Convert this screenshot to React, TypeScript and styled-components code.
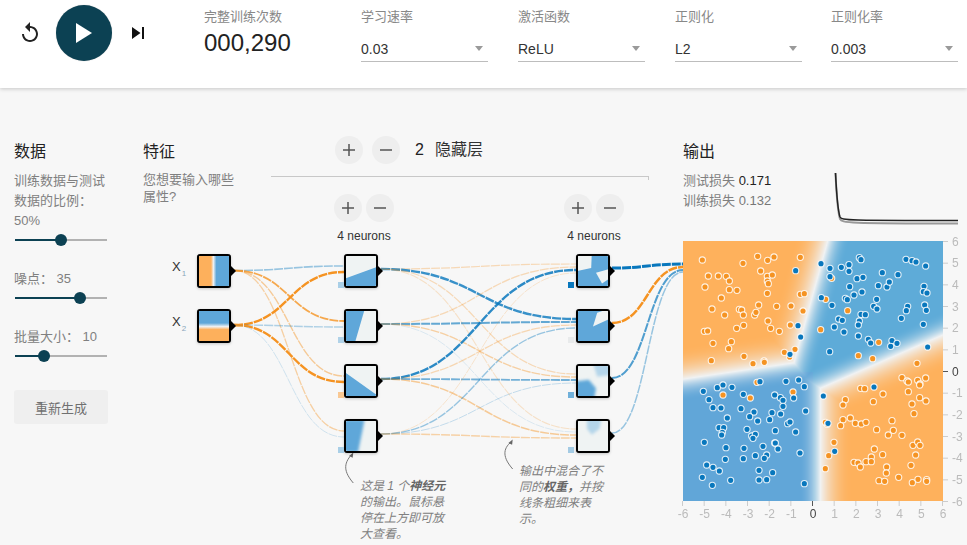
import React, { useEffect, useRef } from "react";
import styled, { createGlobalStyle } from "styled-components";

const FONT = `"Liberation Sans", "Noto Sans CJK SC", sans-serif`;
const ORANGE = "#f59322";
const BLUE = "#0877bd";

const Global = createGlobalStyle`
  html, body { margin: 0; padding: 0; background: #f7f7f7; overflow: hidden; }
  body { font-family: ${FONT}; width: 967px; height: 545px; }
`;

const Page = styled.div`
  width: 967px;
  height: 545px;
  display: flex;
  flex-direction: column;
  overflow: hidden;
  background: #f7f7f7;
`;

const Header = styled.header`
  height: 88px;
  flex: none;
  background: #fff;
  box-shadow: 0 1px 4px rgba(0, 0, 0, 0.2);
  display: flex;
  align-items: flex-start;
  padding-left: 18px;
  position: relative;
  z-index: 2;
`;

const Player = styled.div`
  width: 132px;
  height: 56px;
  margin-top: 5px;
  display: flex;
  align-items: center;
  gap: 14px;
  svg { flex: none; display: block; }
`;

const PlayButton = styled.div`
  width: 56px;
  height: 56px;
  flex: none;
  border-radius: 50%;
  background: #0c4153;
  box-shadow: 0 0 1px rgba(0, 0, 0, 0.3);
  display: flex;
  align-items: center;
  justify-content: center;
`;

const HeaderField = styled.div<{ $w: number; $ml: number }>`
  width: ${(p) => p.$w}px;
  margin-left: ${(p) => p.$ml}px;
  padding-top: 8px;
  flex: none;
`;

const FieldLabel = styled.div`
  font-size: 13px;
  line-height: 18px;
  color: #888;
`;

const EpochValue = styled.div`
  font-size: 24px;
  line-height: 30px;
  margin-top: 2px;
  color: #222;
`;

const SelectBox = styled.div`
  margin-top: 11px;
  height: 25px;
  box-sizing: border-box;
  padding: 0 5px 1px 0;
  border-bottom: 1px solid #bdbdbd;
  display: flex;
  align-items: center;
  justify-content: space-between;
  font-size: 14px;
  color: #333;
`;

const Caret = styled.span`
  width: 0;
  height: 0;
  border-left: 4.5px solid transparent;
  border-right: 4.5px solid transparent;
  border-top: 5px solid #9a9a9a;
`;

const Main = styled.main`
  flex: 1;
  display: flex;
  padding: 53px 0 0 14px;
  min-height: 0;
`;

const DataColumn = styled.section`
  width: 94px;
  margin-right: 35px;
  flex: none;
`;

const Title = styled.h4`
  margin: 0;
  font-size: 16px;
  line-height: 22px;
  font-weight: 400;
  color: #222;
`;

const SideText = styled.div<{ $mt?: number }>`
  font-size: 13px;
  line-height: 20px;
  color: #808080;
  margin-top: ${(p) => p.$mt ?? 0}px;
`;

const SliderTrack = styled.div<{ $mt: number }>`
  position: relative;
  width: 92px;
  margin-left: 1px;
  height: 2px;
  margin-top: ${(p) => p.$mt}px;
  background: #b2b2b2;
`;

const SliderFill = styled.div`
  height: 2px;
  background: #0c4153;
`;

const SliderThumb = styled.div`
  position: absolute;
  top: -5px;
  width: 12px;
  height: 12px;
  margin-left: -6px;
  border-radius: 50%;
  background: #0c4153;
`;

const Regenerate = styled.button`
  display: block;
  width: 94px;
  height: 34px;
  margin-top: 33px;
  border: 0;
  border-radius: 3px;
  background: #efefef;
  color: #707070;
  font: 400 13px ${FONT};
  padding: 0;
`;

const NetworkColumn = styled.section`
  width: 540px;
  flex: none;
  position: relative;
  display: flex;
  align-items: flex-start;
`;

const FeatureIntro = styled.div`
  width: 128px;
  flex: none;
`;

const FeatureText = styled.div`
  width: 96px;
  margin-top: 8px;
  font-size: 13px;
  line-height: 17px;
  color: #808080;
`;

const LayerHeader = styled.div`
  width: 378px;
  height: 41px;
  margin-top: -5px;
  box-sizing: border-box;
  border-bottom: 1px solid #c8c8c8;
  display: flex;
  align-items: flex-start;
  position: relative;
  padding-left: 64px;
  gap: 9px;
  &::after {
    content: "";
    position: absolute;
    right: 0;
    bottom: -1px;
    height: 4px;
    width: 1px;
    background: #c8c8c8;
    transform: translateY(3px);
  }
`;

const RoundButton = styled.div`
  width: 28px;
  height: 28px;
  flex: none;
  border-radius: 50%;
  background: #eeeeee;
  display: flex;
  align-items: center;
  justify-content: center;
  svg { display: block; }
`;

const LayerCount = styled.div`
  margin-left: 6px;
  font-size: 16px;
  line-height: 28px;
  color: #222;
  span { margin-left: 11px; color: #333; }
`;

const Wires = styled.svg`
  position: absolute;
  left: 0;
  top: -141px;
  width: 540px;
  height: 545px;
  pointer-events: none;
`;

const NeuronControls = styled.div<{ $x: number }>`
  position: absolute;
  left: ${(p) => p.$x}px;
  top: 53px;
  width: 62px;
  display: flex;
  flex-direction: column;
  align-items: center;
`;

const ButtonPair = styled.div`
  display: flex;
  gap: 4.5px;
`;

const NeuronLabel = styled.div`
  font-size: 12px;
  line-height: 14px;
  margin-top: 7px;
  color: #333;
  white-space: nowrap;
`;

const NodeBox = styled.div<{ $x: number; $y: number }>`
  position: absolute;
  left: ${(p) => p.$x - 143}px;
  top: ${(p) => p.$y - 141}px;
  width: 34px;
  height: 34px;
  box-sizing: border-box;
  border: 2px solid #000;
  border-radius: 3px;
  background: #eff3f3;
  box-shadow: 0 1px 3px rgba(0, 0, 0, 0.2);
  &::after {
    content: "";
    position: absolute;
    right: -7px;
    top: 10px;
    border-left: 5px solid #000;
    border-top: 5px solid transparent;
    border-bottom: 5px solid transparent;
  }
  svg { display: block; width: 30px; height: 30px; border-radius: 1px; }
`;

const Bias = styled.div<{ $x: number; $y: number; $c: string }>`
  position: absolute;
  left: ${(p) => p.$x - 143}px;
  top: ${(p) => p.$y - 141}px;
  width: 5.5px;
  height: 5.5px;
  background: ${(p) => p.$c};
`;

const InputLabel = styled.div<{ $y: number }>`
  position: absolute;
  left: 29px;
  top: ${(p) => p.$y - 141}px;
  font-size: 13px;
  line-height: 16px;
  color: #333;
  sub {
    font-size: 8px;
    line-height: 0;
    color: #8aa6bb;
    margin-left: 1px;
    vertical-align: -5px;
  }
`;

const Note = styled.div<{ $x: number; $y: number }>`
  position: absolute;
  left: ${(p) => p.$x - 143}px;
  top: ${(p) => p.$y - 141}px;
  width: 88px;
  font-size: 12px;
  line-height: 16px;
  font-style: italic;
  color: #808080;
  b { font-weight: 700; color: #666; }
`;

const OutputColumn = styled.section`
  width: 284px;
  flex: none;
  position: relative;
`;

const LossRow = styled.div<{ $mt: number; $strong?: boolean }>`
  font-size: 13px;
  line-height: 20px;
  margin-top: ${(p) => p.$mt}px;
  color: #808080;
  b { font-weight: 400; color: ${(p) => (p.$strong ? "#222" : "#777")}; }
`;

const LossChart = styled.svg`
  position: absolute;
  left: 152px;
  top: 32px;
  width: 124px;
  height: 54px;
  overflow: visible;
`;

const Plot = styled.div`
  position: relative;
  width: 284px;
  height: 285px;
  margin-top: 30px;
  canvas { display: block; width: 260px; height: 260px; }
`;

const PlotOverlay = styled.svg`
  position: absolute;
  left: 0;
  top: 0;
  width: 284px;
  height: 285px;
  overflow: visible;
  text { font: 400 12px ${FONT}; fill: #bbb; }
  text.zero { fill: #444; }
`;

/* ---------- data points, read off the picture ---------- */
type P = [number, number];
const top = (a: P[]): P[] => a.map(([x, y]) => [x / 3 - 8, y / 3 - 6]);
const bot = (a: P[]): P[] => a.map(([x, y]) => [x / 3 - 8, y / 3 + 144]);

const orangePts: P[] = [
  ...top([[82,75],[204,85],[248,64],[278,76],[297,66],[376,67],[257,108],[100,123],[130,123],[154,124],[163,138],[90,156],[163,164],[186,166],[139,189],[277,124],[292,120],[277,138],[280,146],[277,175],[376,178],[388,176],[111,222],[149,240],[193,223],[200,225],[205,240],[239,240],[243,232],[251,210],[305,214],[348,213],[384,228],[279,258],[287,280],[313,289],[346,270],[185,280],[206,271],[88,289],[98,288],[114,325],[169,320],[161,341],[109,377],[207,364],[234,386],[267,378],[268,382],[328,352],[360,343],[344,366],[246,442],[452,193],[470,130],[518,227],[437,284],[611,322],[550,362],[593,371],[726,385],[681,428],[696,438],[700,441],[728,436],[735,447],[752,429]]),
  ...bot([[144,30],[226,39],[354,21],[557,10],[569,11],[624,27],[700,20],[734,38],[753,48],[711,57],[717,86],[511,44],[504,60],[595,50],[451,112],[457,118],[504,104],[526,99],[541,115],[559,117],[573,112],[497,122],[651,107],[605,134],[655,136],[640,150],[681,151],[477,172],[598,192],[461,212],[589,216],[623,209],[722,210],[714,181],[728,171],[735,181],[537,232],[549,234],[556,246],[573,230],[589,230],[635,246],[634,264],[708,241],[451,251],[671,277],[612,287],[629,289],[712,293],[729,283],[755,284],[755,289],[734,0]]),
];
const bluePts: P[] = [
  ...top([[362,107],[438,86],[465,100],[499,97],[522,89],[522,109],[553,68],[558,74],[693,73],[711,77],[723,81],[752,93],[465,125],[546,131],[564,127],[622,113],[669,119],[524,155],[610,152],[636,156],[643,141],[747,154],[745,170],[756,174],[561,171],[537,180],[439,188],[511,190],[517,194],[605,193],[471,211],[596,214],[606,222],[698,214],[694,227],[749,210],[754,226],[558,238],[571,239],[491,252],[502,256],[553,258],[550,270],[478,276],[679,250],[745,268],[369,272],[507,291],[377,306],[550,303],[580,313],[587,324],[651,317],[647,334],[666,325],[758,336],[464,350],[345,358],[255,440],[333,439],[371,435]]),
  ...bot([[85,19],[127,8],[144,0],[171,7],[205,28],[102,44],[114,68],[138,69],[198,71],[237,81],[224,95],[291,83],[316,38],[324,46],[299,30],[356,39],[324,64],[317,87],[392,78],[445,33],[157,99],[248,108],[284,104],[338,116],[345,111],[132,128],[146,128],[142,142],[140,150],[216,133],[301,137],[362,141],[230,153],[241,148],[234,160],[88,172],[153,188],[207,190],[264,184],[299,174],[301,174],[309,192],[241,212],[275,210],[268,220],[205,221],[151,223],[375,204],[479,199],[95,240],[114,247],[133,258],[252,256],[293,263],[82,277],[167,286],[252,285],[275,284],[112,301],[388,296],[597,6],[388,5],[459,115]]),
];

/* ---------- decision surface ---------- */
const side = (x: number, y: number, ax: number, ay: number, bx: number, by: number) => {
  const dx = bx - ax;
  const dy = by - ay;
  return ((y - ay) * dx - (x - ax) * dy) / Math.hypot(dx, dy);
};
const surface = (x: number, y: number) => {
  const a = -side(x, y, 0.65, 6, -0.9, 0.4);
  const b = side(x, y, -6, -0.35, -0.9, 0.4);
  const tl = Math.min(a, b);
  const c = x - 0.32;
  const d = -side(x, y, 0.25, -0.8, 6, 1.7);
  const br = Math.min(c, d);
  return Math.max(tl, br);
};
const mix = (p: number[], q: number[], t: number) => p.map((v, i) => v + (q[i] - v) * t);
const HEAT_O = [254, 177, 92];
const HEAT_W = [240, 242, 243];
const HEAT_B = [94, 171, 216];

function HeatCanvas() {
  const ref = useRef<HTMLCanvasElement>(null);
  useEffect(() => {
    const ctx = ref.current?.getContext("2d");
    if (!ctx) return;
    const img = ctx.createImageData(260, 260);
    for (let py = 0; py < 260; py++) {
      for (let px = 0; px < 260; px++) {
        const x = (px / 260) * 12 - 6;
        const y = 6 - (py / 260) * 12;
        const o = surface(x, y);
        const t = Math.min(1, Math.abs(o) / (o > 0 ? 1.5 : 1));
        const ease = t * (2 - t);
        const blue = x < 0 && y < 0 ? [97, 166, 216] : HEAT_B;
        const col = mix(HEAT_W, o > 0 ? HEAT_O : blue, ease);
        const i = (py * 260 + px) * 4;
        img.data[i] = col[0];
        img.data[i + 1] = col[1];
        img.data[i + 2] = col[2];
        img.data[i + 3] = 255;
      }
    }
    ctx.putImageData(img, 0, 0);
  }, []);
  return <canvas ref={ref} width={260} height={260} />;
}

/* ---------- wires ---------- */
const curve = (x1: number, y1: number, x2: number, y2: number) => {
  const m = (x1 + x2) / 2;
  return `M${x1} ${y1}C${m} ${y1} ${m} ${y2} ${x2} ${y2}`;
};
const ROWS = [254, 309, 364, 419];
const style1: [string, number, number][][] = [
  [[BLUE, 1.6, 0.4], [ORANGE, 1.8, 0.8], [ORANGE, 1.4, 0.45], [ORANGE, 1.3, 0.4]],
  [[ORANGE, 2.4, 1], [BLUE, 1.4, 0.3], [ORANGE, 2.4, 1], [BLUE, 1, 0.17]],
];
const style2: [string, number, number][][] = [
  [[ORANGE, 1.2, 0.3], [BLUE, 2.4, 0.8], [ORANGE, 1.2, 0.3], [ORANGE, 1.1, 0.22]],
  [[ORANGE, 1.3, 0.3], [BLUE, 2, 0.62], [ORANGE, 1.4, 0.4], [BLUE, 1, 0.12]],
  [[BLUE, 2.4, 0.85], [ORANGE, 1.3, 0.32], [BLUE, 1.8, 0.55], [ORANGE, 1.5, 0.45]],
  [[ORANGE, 1, 0.2], [BLUE, 1.4, 0.4], [BLUE, 1, 0.22], [ORANGE, 1.4, 0.38]],
];
const style3: [string, number, number][] = [
  [BLUE, 3, 1],
  [ORANGE, 2.5, 1],
  [BLUE, 2, 0.7],
  [BLUE, 1.5, 0.4],
];

function WireLayer() {
  const ox = 143;
  const links: React.ReactNode[] = [];
  const add = (key: string, d: string, c: string, w: number, o: number) =>
    links.push(
      <path key={key} d={d} fill="none" stroke={c} strokeWidth={w} strokeOpacity={o} strokeDasharray="9 1" />
    );
  style1.forEach((row, s) =>
    row.forEach(([c, w, o], t) =>
      add(`a${s}${t}`, curve(234 - ox, [270.5, 325][s], 344 - ox, ROWS[t] + 12 + s * 6), c, w, o)
    )
  );
  style2.forEach((row, s) =>
    row.forEach(([c, w, o], t) =>
      add(`b${s}${t}`, curve(381 - ox, ROWS[s] + 15, 576 - ox, ROWS[t] + 10 + s * 3), c, w, o)
    )
  );
  style3.forEach(([c, w, o], s) =>
    add(`c${s}`, curve(612 - ox, ROWS[s] + 14, 683 - ox, 264 + [0, 3, 6, 8][s]), c, w, o)
  );
  return (
    <Wires viewBox="0 0 540 545">
      {links}
      <path d="M210.3 483C201 472 200 464 208.7 454.5" fill="none" stroke="#777" strokeWidth="1" />
      <path d="M210.3 452.5l-4.3 3.500 3.700 1.800z" fill="#666" />
      <path d="M369.7 469C360 458 359 449 368.7 441.5" fill="none" stroke="#777" strokeWidth="1" />
      <path d="M369.7 439.5l-4.300 3.500 3.700 1.800z" fill="#666" />
    </Wires>
  );
}

/* ---------- node pictures ---------- */
const C_B = "#5ea7d9";
const C_L = "#b4d5ea";
function Mini({ kind }: { kind: number }) {
  const id = `soft${kind}`;
  const shapes: Record<number, React.ReactNode> = {
    0: <polygon points="-5,76 105,36 105,105 -5,105" fill={C_B} />,
    1: <polygon points="-5,-5 62,-5 30,105 -5,105" fill={C_B} />,
    2: <polygon points="-5,20 105,98 105,105 -5,105" fill={C_B} />,
    3: <polygon points="-10,-5 62,-5 40,105 -10,105" fill={C_B} />,
    4: (
      <>
        <rect x="-5" y="-5" width="110" height="110" fill={C_B} />
        <polygon points="-10,-10 46,-10 44,40 -10,52" fill="#eff3f3" />
        <polygon points="60,56 110,42 110,72 80,92" fill="#eff3f3" />
      </>
    ),
    5: (
      <>
        <rect x="-5" y="-5" width="110" height="110" fill={C_B} />
        <polygon points="50,52 64,6 110,-10 110,24" fill="#eff3f3" />
      </>
    ),
    6: (
      <>
        <polygon points="-10,52 36,46 60,74 54,110 -10,110" fill={C_B} />
        <polygon points="50,-10 110,-10 110,30 64,36" fill={C_L} />
      </>
    ),
    7: <polygon points="30,-10 78,-10 72,26 46,46 30,26" fill={C_L} />,
  };
  return (
    <svg viewBox="0 0 100 100">
      <defs>
        <filter id={id} x="-20%" y="-20%" width="140%" height="140%">
          <feGaussianBlur stdDeviation={kind === 3 || kind >= 6 ? 4.5 : 2.5} />
        </filter>
      </defs>
      <rect width="100" height="100" fill="#eff3f3" />
      <g filter={`url(#${id})`}>{shapes[kind]}</g>
    </svg>
  );
}

function InputMini({ vertical }: { vertical?: boolean }) {
  const id = vertical ? "gradX2" : "gradX1";
  return (
    <svg viewBox="0 0 100 100">
      <defs>
        {vertical ? (
          <linearGradient id={id} x1="0" y1="0" x2="0" y2="1">
            <stop offset="0.4" stopColor={C_B} />
            <stop offset="0.52" stopColor="#f0f2f3" />
            <stop offset="0.62" stopColor="#fdb05c" />
          </linearGradient>
        ) : (
          <linearGradient id={id} x1="0" y1="0" x2="1" y2="0">
            <stop offset="0.4" stopColor="#fdb05c" />
            <stop offset="0.48" stopColor="#f0f2f3" />
            <stop offset="0.58" stopColor={C_B} />
          </linearGradient>
        )}
      </defs>
      <rect width="100" height="100" fill={`url(#${id})`} />
    </svg>
  );
}

const Plus = () => (
  <svg width="14" height="14" viewBox="0 0 14 14">
    <path d="M1 7h12M7 1v12" stroke="#555" strokeWidth="1.5" fill="none" />
  </svg>
);
const Minus = () => (
  <svg width="14" height="14" viewBox="0 0 14 14">
    <path d="M1 7h12" stroke="#555" strokeWidth="1.5" fill="none" />
  </svg>
);

const fields = [
  { label: "学习速率", value: "0.03", ml: 0 },
  { label: "激活函数", value: "ReLU", ml: 30 },
  { label: "正则化", value: "L2", ml: 30 },
  { label: "正则化率", value: "0.003", ml: 29 },
];

function Slider({ pos, mt }: { pos: number; mt: number }) {
  return (
    <SliderTrack $mt={mt}>
      <SliderFill style={{ width: pos }} />
      <SliderThumb style={{ left: pos }} />
    </SliderTrack>
  );
}

const ticks = [6, 5, 4, 3, 2, 1, 0, -1, -2, -3, -4, -5, -6];

export default function App() {
  return (
    <Page>
      <Global />
      <Header>
        <Player>
          <svg width="24" height="24" viewBox="0 0 24 24" fill="#222">
            <path d="M12 5V1L7 6l5 5V7c3.31 0 6 2.69 6 6s-2.69 6-6 6-6-2.69-6-6H4c0 4.42 3.58 8 8 8s8-3.58 8-8-3.58-8-8-8z" />
          </svg>
          <PlayButton>
            <svg width="16" height="20" viewBox="0 0 16 20" fill="#fff">
              <path d="M0 0l16 10L0 20z" />
            </svg>
          </PlayButton>
          <svg width="24" height="24" viewBox="0 0 24 24" fill="#111">
            <path d="M6 18l8.5-6L6 6v12zM16 6v12h2V6h-2z" />
          </svg>
        </Player>
        <HeaderField $w={157} $ml={54}>
          <FieldLabel>完整训练次数</FieldLabel>
          <EpochValue>000,290</EpochValue>
        </HeaderField>
        {fields.map((f) => (
          <HeaderField key={f.label} $w={127} $ml={f.ml}>
            <FieldLabel>{f.label}</FieldLabel>
            <SelectBox>
              {f.value}
              <Caret />
            </SelectBox>
          </HeaderField>
        ))}
      </Header>
      <Main>
        <DataColumn>
          <Title>数据</Title>
          <SideText $mt={8}>
            训练数据与测试
            <br />
            数据的比例：
            <br />
            50%
          </SideText>
          <Slider pos={46} mt={8} />
          <SideText $mt={28}>噪点：&nbsp;35</SideText>
          <Slider pos={65} mt={8} />
          <SideText $mt={28}>批量大小：&nbsp;10</SideText>
          <Slider pos={29} mt={8} />
          <Regenerate>重新生成</Regenerate>
        </DataColumn>
        <NetworkColumn>
          <WireLayer />
          <FeatureIntro>
            <Title>特征</Title>
            <FeatureText>您想要输入哪些属性?</FeatureText>
          </FeatureIntro>
          <LayerHeader>
            <RoundButton>
              <Plus />
            </RoundButton>
            <RoundButton>
              <Minus />
            </RoundButton>
            <LayerCount>
              2<span>隐藏层</span>
            </LayerCount>
          </LayerHeader>
          <NeuronControls $x={190}>
            <ButtonPair>
              <RoundButton>
                <Plus />
              </RoundButton>
              <RoundButton>
                <Minus />
              </RoundButton>
            </ButtonPair>
            <NeuronLabel>4 neurons</NeuronLabel>
          </NeuronControls>
          <NeuronControls $x={420}>
            <ButtonPair>
              <RoundButton>
                <Plus />
              </RoundButton>
              <RoundButton>
                <Minus />
              </RoundButton>
            </ButtonPair>
            <NeuronLabel>4 neurons</NeuronLabel>
          </NeuronControls>
          <InputLabel $y={259}>
            X<sub>1</sub>
          </InputLabel>
          <InputLabel $y={314}>
            X<sub>2</sub>
          </InputLabel>
          <NodeBox $x={197} $y={254}>
            <InputMini />
          </NodeBox>
          <NodeBox $x={197} $y={309}>
            <InputMini vertical />
          </NodeBox>
          {ROWS.map((y, i) => (
            <NodeBox key={`a${y}`} $x={344} $y={y}>
              <Mini kind={i} />
            </NodeBox>
          ))}
          {ROWS.map((y, i) => (
            <NodeBox key={`b${y}`} $x={576} $y={y}>
              <Mini kind={i + 4} />
            </NodeBox>
          ))}
          {["#a9cfe7", "#b0d2e8", "#f9c893", "#a9cfe7"].map((c, i) => (
            <Bias key={`ba${i}`} $x={338} $y={ROWS[i] + 28} $c={c} />
          ))}
          {["#0877bd", "#e8eaeb", "#70b0da", "#a4cbe4"].map((c, i) => (
            <Bias key={`bb${i}`} $x={568} $y={ROWS[i] + 28} $c={c} />
          ))}
          <Note $x={360} $y={478}>
            这是 1 个<b>神经元</b>的输出。鼠标悬停在上方即可放大查看。
          </Note>
          <Note $x={519} $y={463}>
            输出中混合了不同的<b>权重，</b>并按线条粗细来表示。
          </Note>
        </NetworkColumn>
        <OutputColumn>
          <Title>输出</Title>
          <LossRow $mt={8} $strong>
            测试损失 <b>0.171</b>
          </LossRow>
          <LossRow $mt={0}>
            训练损失 <b>0.132</b>
          </LossRow>
          <LossChart viewBox="0 0 124 54">
            <path d="M0.5 0C1.5 22 2.5 38 5 46C7 50 12 50.5 123 50.5" fill="none" stroke="#999" strokeWidth="2" />
            <path d="M0.5 0C1.5 20 2.5 36 5 44C7 47.5 12 47.5 123 47.5" fill="none" stroke="#222" strokeWidth="1.5" />
          </LossChart>
          <Plot>
            <HeatCanvas />
            <PlotOverlay viewBox="0 0 284 285">
              {[...orangePts, ...bluePts].map(([x, y], i) => (
                <circle
                  key={i}
                  cx={x}
                  cy={y}
                  r={3.1}
                  fill={i < orangePts.length ? ORANGE : BLUE}
                  stroke="#fff"
                  strokeOpacity="0.85"
                  strokeWidth="1.1"
                />
              ))}
              {ticks.map((t, i) => {
                const p = (i / 12) * 260;
                return (
                  <g key={t}>
                    <line x1="260" x2="265" y1={p + 0.5} y2={p + 0.5} stroke={t === 0 ? "#555" : "#ccc"} />
                    <text x="269" y={p + 4.5} className={t === 0 ? "zero" : ""}>
                      {t}
                    </text>
                    <line x1={260 - p - 0.5} x2={260 - p - 0.5} y1="260" y2="265" stroke={t === 0 ? "#555" : "#ccc"} />
                    <text x={260 - p} y="277" textAnchor="middle" className={t === 0 ? "zero" : ""}>
                      {t}
                    </text>
                  </g>
                );
              })}
            </PlotOverlay>
          </Plot>
        </OutputColumn>
      </Main>
    </Page>
  );
}
